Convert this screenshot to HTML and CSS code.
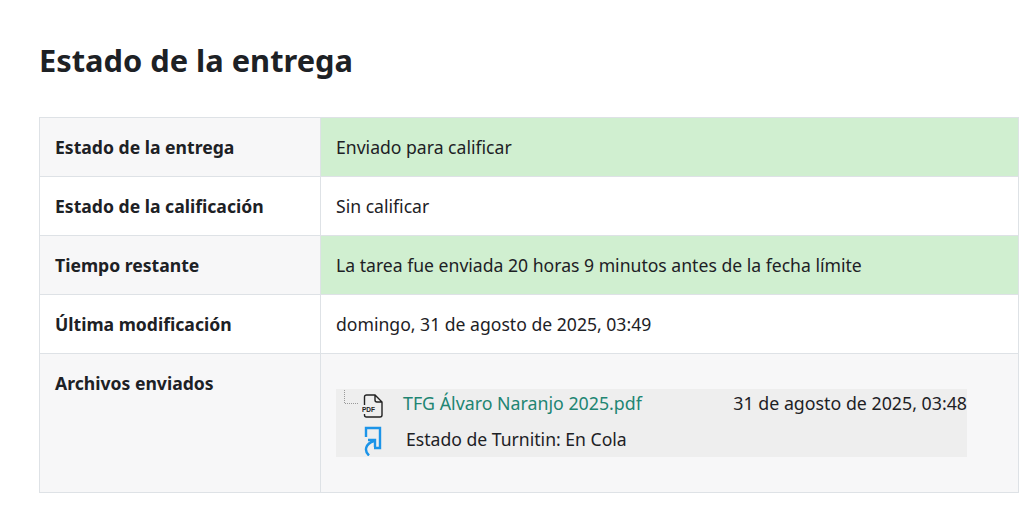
FILE: index.html
```html
<!DOCTYPE html>
<html lang="en">
<head>
    <meta charset="UTF-8">
    <title>Estado de la entrega</title>
    <link rel="stylesheet" href="styles.css">
</head>
<body>
    <h2 class="title">Estado de la entrega</h2>

    <table class="status-table">
        <tr class="odd">
            <th>Estado de la entrega</th>
            <td class="ok">Enviado para calificar</td>
        </tr>
        <tr>
            <th>Estado de la calificación</th>
            <td>Sin calificar</td>
        </tr>
        <tr class="odd">
            <th>Tiempo restante</th>
            <td class="ok">La tarea fue enviada 20 horas 9 minutos antes de la fecha límite</td>
        </tr>
        <tr>
            <th>Última modificación</th>
            <td>domingo, 31 de agosto de 2025, 03:49</td>
        </tr>
        <tr class="odd files-row">
            <th>Archivos enviados</th>
            <td>
                <div class="files">
                    <div class="file-row">
                        <svg class="tree" width="15" height="16" viewBox="0 0 15 16">
                            <path d="M0.5 1V14.500H15" fill="none" stroke="#999" stroke-dasharray="1 1"/>
                        </svg>
                        <svg class="icon pdf" width="22" height="26" viewBox="0 0 22 26">
                            <path d="M2.500 12V4a2 2 0 0 1 2-2H13L20 9V22a2 2 0 0 1-2 2H4.500a2 2 0 0 1-2-2V21M13 2V7a2 2 0 0 0 2 2H20" fill="none" stroke="#222" stroke-width="1.400"/>
                            <text x="0" y="19" class="pdf-label" textLength="13" lengthAdjust="spacingAndGlyphs">PDF</text>
                        </svg>
                        <a href="#" class="file-link">TFG Álvaro Naranjo 2025.pdf</a>
                        <span class="file-date">31 de agosto de 2025, 03:48</span>
                    </div>
                    <div class="turnitin-row">
                        <svg class="icon" width="22" height="32" viewBox="0 0 22 32">
                            <path d="M4 13V4H18V24H12" fill="none" stroke="#1c94e8" stroke-width="2.400"/>
                            <path d="M7 31.500C2 27 3 20 12 17" fill="none" stroke="#1c94e8" stroke-width="2.400"/>
                            <path d="M6 16H13V23" fill="none" stroke="#1c94e8" stroke-width="2.400"/>
                        </svg>
                        <span class="turnitin-text">Estado de Turnitin: En Cola</span>
                    </div>
                </div>
            </td>
        </tr>
    </table>
</body>
</html>
```

FILE: styles.css
```css
/* Reset styles */
* {
    margin: 0;
    padding: 0;
    box-sizing: border-box;
}

body {
    padding: 0 17px 0 39px;
    background-color: #fff;
    color: #1d2125;
    font-family: "Noto Sans", "Open Sans", sans-serif;
    font-size: 17.600px;
}

.title {
    height: 117px;
    padding-top: 36px;
    font-size: 30.800px;
    line-height: 48px;
    font-weight: 700;
}

/* Table styles */
.status-table {
    width: 980px;
    border-collapse: collapse;
    table-layout: fixed;
}

.status-table th,
.status-table td {
    height: 59px;
    padding: 0 15px;
    border: 1px solid #dee2e6;
    text-align: left;
    vertical-align: middle;
    font-weight: 400;
}

.status-table th {
    width: 281px;
    font-weight: 700;
}

.odd th,
.odd td {
    background-color: #f7f7f8;
}

.status-table .ok {
    background-color: #d0efd0;
}

.files-row th,
.files-row td {
    height: 139px;
    vertical-align: top;
}

.files-row th {
    padding-top: 17px;
}

.files-row td {
    padding-top: 35px;
}

/* Submitted files */
.files {
    width: 631px;
    background-color: #eeeeee;
}

.file-row,
.turnitin-row {
    display: flex;
    align-items: center;
    height: 34px;
}

.file-row {
    align-items: flex-start;
    line-height: 28px;
    font-size: 17.800px;
}

.tree {
    margin: 0 3px 0 8px;
    align-self: flex-start;
}

.file-row .icon {
    flex: none;
    align-self: center;
}

.pdf-label {
    font-family: "Liberation Sans", sans-serif;
    font-size: 8px;
    font-weight: 700;
    fill: #222;
}

.file-link {
    margin-left: 19px;
    color: #218572;
    text-decoration: none;
}

.file-date {
    margin-left: auto;
}

.turnitin-row .icon {
    margin-left: 26px;
}

.turnitin-text {
    margin-left: 22px;
    padding-bottom: 2px;
}
```
